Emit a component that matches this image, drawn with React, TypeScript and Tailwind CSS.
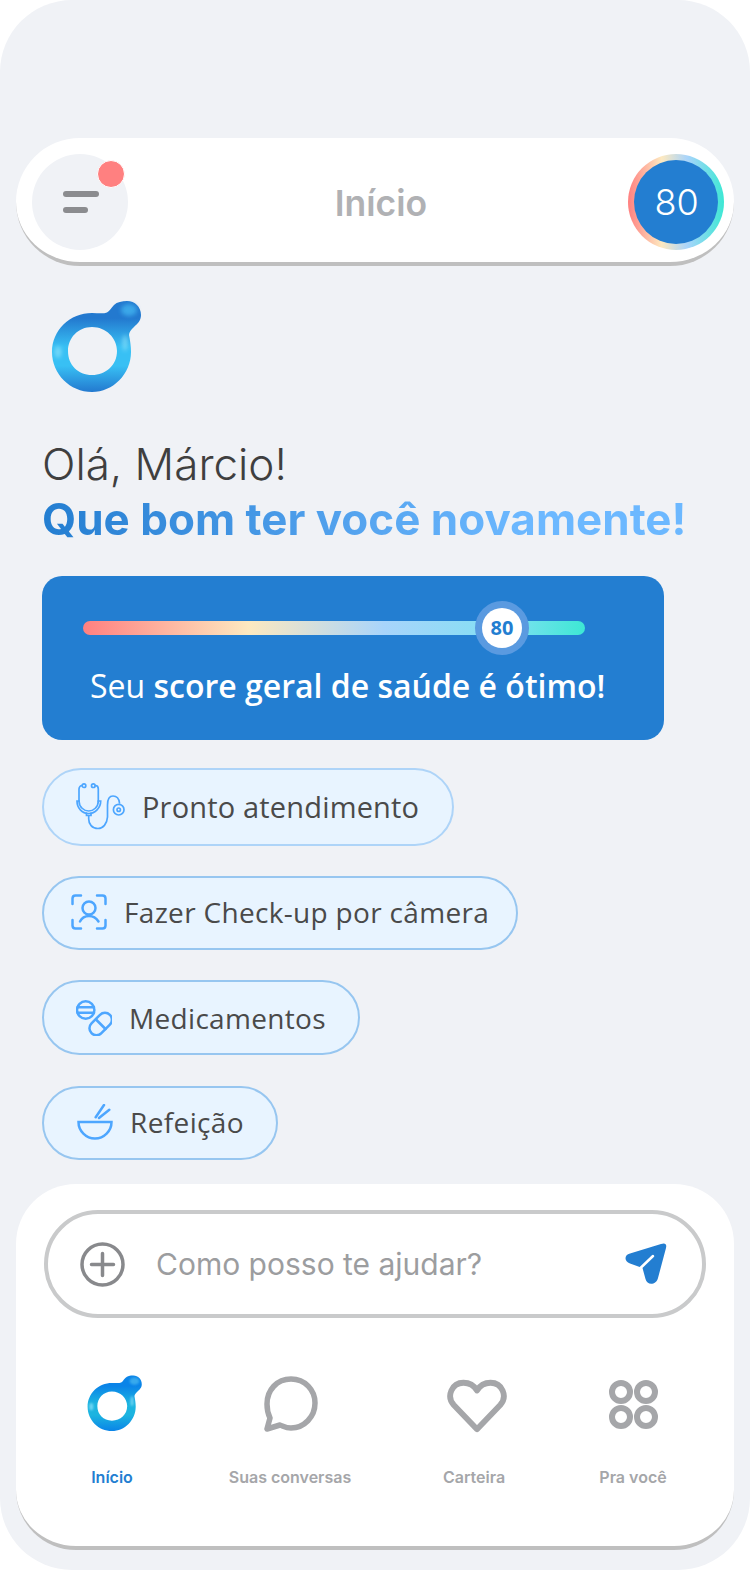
const ScoreRing = () => (
  <div className="flex h-24 w-24 items-center justify-center rounded-full bg-[linear-gradient(90deg,#ff8080,#fde9c0_35%,#a8d4fb_62%,#3de8d4)]">
    <div className="flex h-[84px] w-[84px] items-center justify-center rounded-full bg-[#237ed1]">
      <span className="ml-[1px] text-[36px] font-light text-white [font-family:Inter,sans-serif]">80</span>
    </div>
  </div>
);

const Logo = ({ size, id, dark, light }: { size: number; id: string; dark: string; light: string }) => (
  <svg width={size} height={size} viewBox="0 0 92 92">
    <defs>
      <linearGradient id={id} x1="0.5" y1="0.1" x2="0.5" y2="1">
        <stop offset="0.1" stopColor={dark} />
        <stop offset="0.45" stopColor={light} />
        <stop offset="0.68" stopColor={light} />
        <stop offset="1" stopColor={dark} />
      </linearGradient>
      <filter id={`${id}-blur`} x="-100%" y="-100%" width="300%" height="300%">
        <feGaussianBlur stdDeviation="2" />
      </filter>
    </defs>
    <path
      fill={`url(#${id})`}
      fillRule="evenodd"
      d="M41 13C47 13 52 14 56 12.5C59 11 60 8 63 5C66 2 71 1 76 1C84 1 90 7 90 15C90 21 86 24 83 27C80 30 78 32 78 35C79 40 80 46 80 52C80 74 62 92 41 92C19 92 1 74 1 52C1 30 19 13 41 13ZM41 27C27 27 17 38 17 51C17 65 27 75 41 75C55 75 66 65 66 51C66 38 55 27 41 27Z"
    />
    <ellipse cx="7" cy="52" rx="3.5" ry="6" fill="#8ee2fa" opacity="0.7" filter={`url(#${id}-blur)`} />
    <ellipse cx="74" cy="43" rx="2.5" ry="8" fill="#8ee2fa" opacity="0.7" filter={`url(#${id}-blur)`} />
    <ellipse cx="78" cy="10" rx="8" ry="6" fill="#3fb0ee" opacity="0.85" filter={`url(#${id}-blur)`} />
  </svg>
);

const Chip = ({ icon, label, className }: { icon: React.ReactNode; label: string; className: string }) => (
  <div className={`flex items-center rounded-full border-2 bg-[#e8f4ff] text-[#4a4a4a] [font-family:'Open_Sans',sans-serif] ${className}`}>
    {icon}
    <span>{label}</span>
  </div>
);

const NavItem = ({ icon, label, active, className }: { icon: React.ReactNode; label: string; active?: boolean; className: string }) => (
  <div className={`flex flex-col items-center ${className}`}>
    <div className="flex h-[64px] items-center justify-center">{icon}</div>
    <span className={`mt-[30px] whitespace-nowrap text-[16px] font-semibold [font-family:Inter,sans-serif] ${active ? 'text-[#237ed1]' : 'text-[#a5a6a9]'}`}>{label}</span>
  </div>
);

export default function App() {
  return (
    <div className="flex h-[1570px] w-[750px] flex-col overflow-hidden rounded-[72px] bg-[#f0f2f6]">
      <div className="mx-4 mt-[138px] flex h-[128px] shrink-0 items-center justify-between rounded-[64px] border-b-[4px] border-[#bfbfbf] bg-white pl-4 pr-[10px] pt-[4px]">
        <div className="relative flex h-24 w-24 flex-col justify-center gap-[10px] rounded-full bg-[#f0f2f6] pl-[31px]">
          <div className="h-[6px] w-[36px] rounded-full bg-[#8b8c8f]" />
          <div className="h-[6px] w-[25px] rounded-full bg-[#8b8c8f]" />
          <div className="absolute left-[65px] top-[6px] h-[28px] w-[28px] rounded-full border border-white bg-[#ff8080]" />
        </div>
        <span className="ml-[6px] mt-[4px] text-[35.5px] font-semibold text-[#b0b1b4] [font-family:Inter,sans-serif]">Início</span>
        <ScoreRing />
      </div>

      <div className="ml-[51px] mt-[34px] h-[92px]">
        <Logo size={92} id="logo-top" dark="#2379cf" light="#38c0f4" />
      </div>

      <div className="ml-[42px] mt-[45px] text-[44px] leading-[55px] [font-family:Inter,sans-serif]">
        <div className="font-[350] text-[#3f3f3f]">Olá, Márcio!</div>
        <div className="w-fit bg-gradient-to-r from-[#237ed1] to-[#6cb8ff] to-75% bg-clip-text font-bold text-transparent">Que bom ter você novamente!</div>
      </div>

      <div className="ml-[42px] mt-[29px] flex h-[164px] w-[622px] shrink-0 flex-col rounded-[20px] bg-[#237ed1] px-[41px] pt-[45px]">
        <div className="relative h-[14px] w-[502px] rounded-full bg-[linear-gradient(90deg,#ff8080,#fde9c0_33%,#a8d4fb_60%,#7fe0f2_85%,#3de8d4)]">
          <div className="absolute left-[392px] top-[-20px] flex h-[54px] w-[54px] items-center justify-center rounded-full bg-[#5a9ae0]">
            <div className="flex h-10 w-10 items-center justify-center rounded-full bg-white text-[20px] font-bold text-[#237ed1] [font-family:'Open_Sans',sans-serif]">80</div>
          </div>
        </div>
        <div className="mt-[27px] whitespace-nowrap pl-[7px] text-[32px] text-white [font-family:'Open_Sans',sans-serif]">
          Seu <span className="font-semibold">score geral de saúde é ótimo!</span>
        </div>
      </div>

      <div className="ml-[42px] mt-[28px] flex flex-col items-start">
        <Chip
          className="h-[78px] w-[412px] border-[#aed4f8] pl-[32px] text-[29px] tracking-[0.17px]"
          label="Pronto atendimento"
          icon={
            <svg width="50" height="48" viewBox="0 0 50 48" fill="none" stroke="#4da6ff" strokeWidth="1.7" className="mr-[16px]" strokeLinecap="round">
              <circle cx="8" cy="2.7" r="1.8" />
              <circle cx="17.3" cy="2.7" r="1.8" />
              <path d="M6 2.5C4.5 2.5 3 4 3 6V18M19.5 2.5C21 2.5 22.3 4 22.3 6V18" />
              <path d="M3 18C3 24 8 28 12.7 28C17.5 28 22.3 24 22.3 18" />
              <path d="M3 18H1C1 25 6 30.5 12.7 30.5C19 30.5 24.7 25 24.7 18H22.3" />
              <path d="M10.5 30V32.5H15V30" />
              <path d="M12.7 32.5V36C12.7 41 16 45.5 22 45.5C27 45.5 31 41 31.5 34V22C31.5 16 34 13 37 13C40.5 13 43 15.5 43.5 20" />
              <circle cx="42.7" cy="26.7" r="5.3" />
              <circle cx="42.7" cy="26.7" r="1.7" />
            </svg>
          }
        />
        <Chip
          className="mt-[30px] h-[74px] w-[476px] border-[#97c6f0] pb-[2px] pl-[27px] text-[28px] tracking-[0.32px]"
          label="Fazer Check-up por câmera"
          icon={
            <svg width="36" height="36" viewBox="0 0 36 36" fill="none" stroke="#4da6ff" strokeWidth="2.5" className="mr-[17px]" strokeLinecap="round">
              <path d="M10 1.5H4.5C2.5 1.5 1.5 2.5 1.5 4.5V10M26 1.5H31.5C33.5 1.5 34.5 2.5 34.5 4.5V10M1.5 26V31.5C1.5 33.5 2.5 34.5 4.5 34.5H10M34.5 26V31.5C34.5 33.5 33.5 34.5 31.5 34.5H26" />
              <circle cx="18" cy="14" r="6.5" />
              <path d="M9 27.5C11 23.5 14.5 22 18 22C21.5 22 25 23.5 27.5 27.5" />
            </svg>
          }
        />
        <Chip
          className="mt-[30px] h-[75px] w-[318px] border-[#97c6f0] pl-[32px] text-[28px] tracking-[0.32px]"
          label="Medicamentos"
          icon={
            <svg width="36" height="36" viewBox="0 0 36 36" fill="none" stroke="#4da6ff" strokeWidth="2.5" className="mr-[17px]" strokeLinecap="round">
              <circle cx="9.7" cy="10" r="8.7" />
              <path d="M1.5 7.3H18M1.5 12.7H18" />
              <rect x="11.7" y="17" width="26" height="14" rx="7" transform="rotate(-45 24.7 24)" />
              <path d="M20 19.5L29.5 29" />
            </svg>
          }
        />
        <Chip
          className="mt-[31px] h-[74px] w-[236px] border-[#97c6f0] pb-[2px] pl-[33px] text-[28px] tracking-[0.37px]"
          label="Refeição"
          icon={
            <svg width="36" height="36" viewBox="0 0 36 36" fill="none" stroke="#4da6ff" strokeWidth="2.5" className="mr-[17px]" strokeLinecap="round">
              <path d="M1.5 18H34.5C34.5 27 27 34.5 18 34.5C9 34.5 1.5 27 1.5 18Z" />
              <path d="M18.7 13.3L27 1M22 14L32.3 5.7" />
            </svg>
          }
        />
      </div>

      <div className="mx-4 mt-[24px] flex h-[366px] shrink-0 flex-col rounded-[60px] border-b-[4px] border-[#bfbfbf] bg-white px-[28px] pt-[26px]">
        <div className="flex h-[108px] shrink-0 items-center rounded-full border-[4px] border-[#c9cacb] pl-[32px] pr-[35px]">
          <svg width="45" height="45" viewBox="0 0 45 45" fill="none" stroke="#88898c" strokeWidth="3.5" strokeLinecap="round">
            <circle cx="22.5" cy="22.5" r="20.5" />
            <path d="M22.5 11.5V33.5M11.5 22.5H33.5" />
          </svg>
          <span className="ml-[31px] flex-1 text-[30px] text-[#9c9d9f] [font-family:Inter,sans-serif]">Como posso te ajudar?</span>
          <svg width="42" height="42" viewBox="0 0 42 42">
            <path fill="#237ed1" d="M36 1C40 -0.5 42 1 41 5L33 35C31.5 42 22 43 20.5 36L17.5 25L5 20.5C-1 18 -1 12 5 10.5Z" />
            <path d="M15.5 25L28 13" stroke="#ffffff" strokeWidth="2.5" strokeLinecap="round" fill="none" />
          </svg>
        </div>
        <div className="mt-[53px] flex items-start">
          <NavItem
            className="w-[136px]"
            active
            label="Início"
            icon={
              <div className="ml-[6px]">
                <Logo size={56} id="logo-nav" dark="#0a84e8" light="#1cb4e0" />
              </div>
            }
          />
          <NavItem
            className="ml-[40px] w-[140px]"
            label="Suas conversas"
            icon={
              <svg width="54" height="56" viewBox="0 0 54 56" fill="none" stroke="#a5a6a9" strokeWidth="5.5" strokeLinejoin="round" className="mt-[2px] ml-[1px]">
                <path d="M27 3C41 3 51 14 51 27C51 41 40 52 27 52C22 52 19 50 16 49L3 53L6 42C4 38 3 33 3 28C3 14 13 3 27 3Z" />
              </svg>
            }
          />
          <NavItem
            className="ml-[64px] w-[100px]"
            label="Carteira"
            icon={
              <svg width="60" height="54" viewBox="0 0 62 54" fill="none" stroke="#a5a6a9" strokeWidth="6" strokeLinejoin="round" className="ml-[5px] mt-[6px]">
                <path d="M31 51L7 26C-1 17 5 3 17 3C23 3 28 6 31 11C34 6 39 3 45 3C57 3 63 17 55 26Z" />
              </svg>
            }
          />
          <NavItem
            className="ml-[64px] w-[90px]"
            label="Pra você"
            icon={
              <svg width="50" height="50" viewBox="0 0 50 50" fill="none" stroke="#a5a6a9" strokeWidth="6" className="ml-[2px] mt-[4px]">
                <circle cx="12" cy="12" r="9" />
                <circle cx="37" cy="12" r="9" />
                <circle cx="12" cy="37" r="9" />
                <circle cx="37" cy="37" r="9" />
              </svg>
            }
          />
        </div>
      </div>
    </div>
  );
}
